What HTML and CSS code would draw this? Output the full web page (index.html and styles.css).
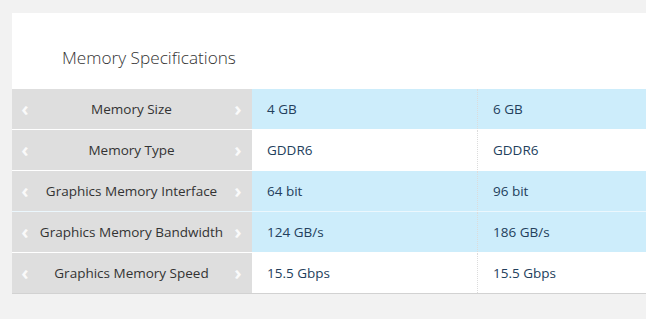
FILE: index.html
```html
<!DOCTYPE html>
<html>
<head>
<meta charset="utf-8">
<link rel="stylesheet" href="styles.css">
</head>
<body>
<section class="panel">
  <h2 class="title">Memory Specifications</h2>
  <div class="table">
    <div class="row blue">
      <div class="label"><span class="chev">‹</span><span class="name">Memory Size</span><span class="chev">›</span></div>
      <div class="cell">4 GB</div>
      <div class="cell">6 GB</div>
    </div>
    <div class="row">
      <div class="label"><span class="chev">‹</span><span class="name">Memory Type</span><span class="chev">›</span></div>
      <div class="cell">GDDR6</div>
      <div class="cell">GDDR6</div>
    </div>
    <div class="row blue">
      <div class="label"><span class="chev">‹</span><span class="name">Graphics Memory Interface</span><span class="chev">›</span></div>
      <div class="cell">64 bit</div>
      <div class="cell">96 bit</div>
    </div>
    <div class="row blue">
      <div class="label"><span class="chev">‹</span><span class="name">Graphics Memory Bandwidth</span><span class="chev">›</span></div>
      <div class="cell">124 GB/s</div>
      <div class="cell">186 GB/s</div>
    </div>
    <div class="row">
      <div class="label"><span class="chev">‹</span><span class="name">Graphics Memory Speed</span><span class="chev">›</span></div>
      <div class="cell">15.5 Gbps</div>
      <div class="cell">15.5 Gbps</div>
    </div>
  </div>
</section>
</body>
</html>
```

FILE: styles.css
```css
html, body {
  margin: 0;
  padding: 0;
  background: #f2f2f2;
  overflow: hidden;
  width: 646px;
  height: 319px;
}
body {
  padding: 13px 0 0 12px;
  box-sizing: border-box;
  font-family: "Open Sans", "Noto Sans", sans-serif;
}
.panel {
  background: #ffffff;
  width: 634px;
}
.title {
  margin: 0;
  height: 76px;
  padding: 12px 0 0 50px;
  box-sizing: border-box;
  display: flex;
  align-items: center;
  font-family: "Open Sans", sans-serif;
  font-weight: 300;
  font-size: 17.2px;
  color: #333;
}
.table {
  border-bottom: 1px solid #d2d2d2;
}
.row {
  display: grid;
  grid-template-columns: 240px 225px 169px;
  height: 41px;
  box-sizing: border-box;
  border-top: 1px solid #ffffff;
  background: #ffffff;
}
.row:first-child {
  border-top: none;
  height: 40px;
}
.row.blue .cell {
  background: #cdedfb;
}
.row.blue + .row.blue {
  border-top-color: #ebf7fd;
}
.label {
  background: #dedede;
  display: flex;
  align-items: center;
  justify-content: space-between;
  padding: 0 10px 0 9px;
  font-size: 13.5px;
  color: #333;
}
.chev {
  color: #fafafa;
  font-size: 20px;
  font-weight: 700;
  width: 8px;
  line-height: 1;
  text-align: center;
}
.name {
  flex: 1;
  text-align: center;
}
.cell {
  display: flex;
  align-items: center;
  padding-left: 15px;
  font-size: 13.5px;
  color: #23405c;
}
.cell + .cell {
  border-left: 1px dotted #dcdcdc;
}
```
